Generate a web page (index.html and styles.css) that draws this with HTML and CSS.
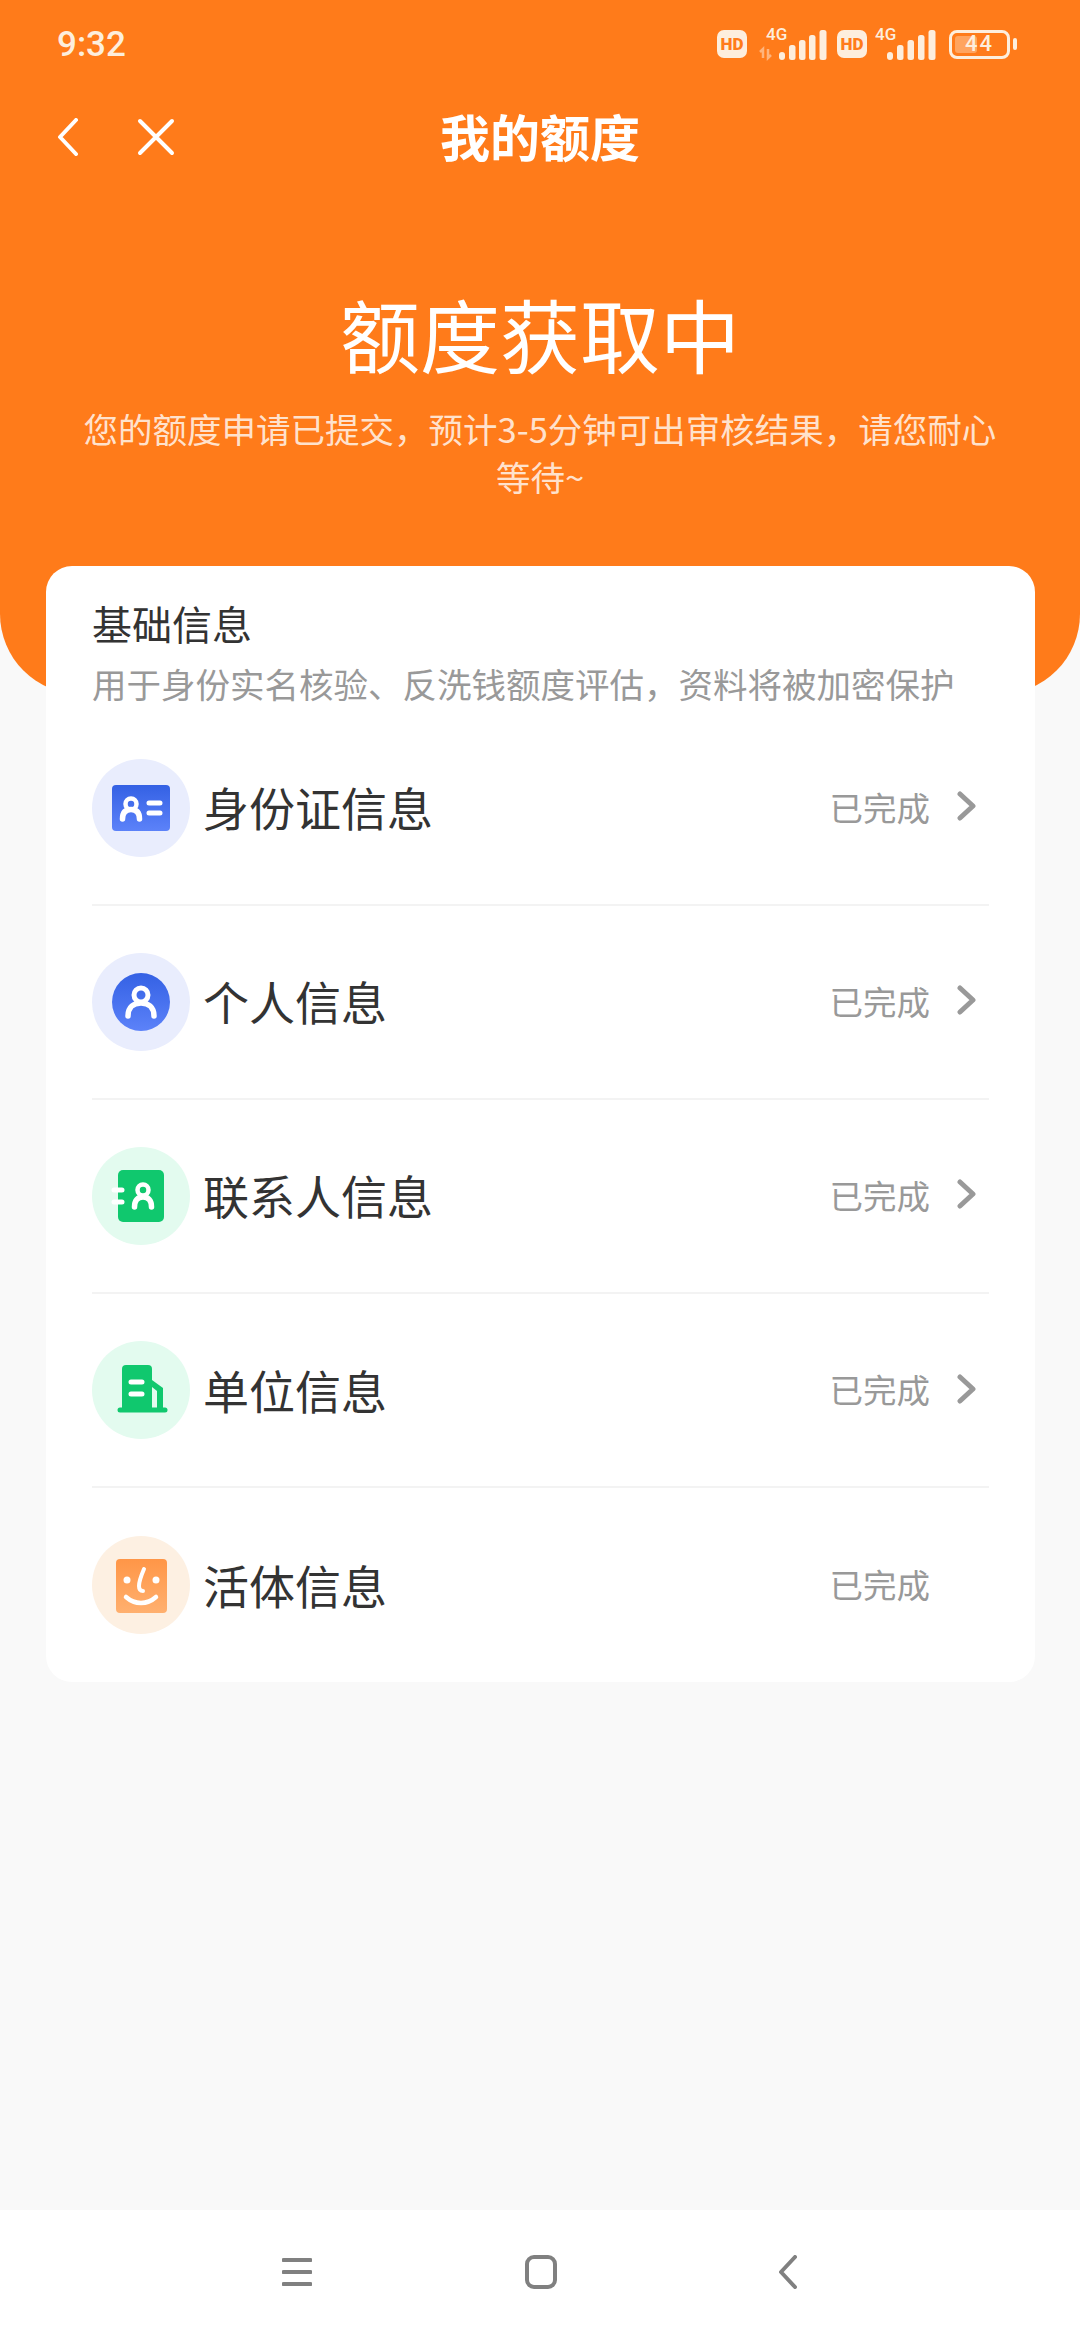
FILE: index.html
```html
<!DOCTYPE html>
<html lang="zh-CN">
<head>
  <meta charset="UTF-8" />
  <meta name="viewport" content="width=device-width, initial-scale=1.0" />
  <title>我的额度</title>
  <link rel="stylesheet" href="styles.css">
</head>
<body>
  <div class="page">
    <header class="header">
      <div class="status">
        <span class="time">9:32</span>
        <div class="status-right">
          <span class="hd">HD</span>
          <svg class="signal" width="70" height="40" viewBox="0 0 70 40">
            <text x="9" y="16" class="net">4G</text>
            <g transform="translate(0 2)">
              <path d="M6 32V23L3 26M11 23v9l3-3" class="arrows"/>
              <rect x="22" y="26" width="6" height="8" rx="3" class="bar"/>
              <rect x="32" y="19" width="6.5" height="15" rx="2.5" class="bar"/>
              <rect x="42" y="14" width="6.5" height="20" rx="2.5" class="bar"/>
              <rect x="52" y="9" width="6.5" height="25" rx="2.5" class="bar"/>
              <rect x="62.500" y="4" width="7" height="30" rx="2.5" class="bar"/>
            </g>
          </svg>
          <span class="hd">HD</span>
          <svg class="signal second" width="61" height="40" viewBox="0 0 61 40">
            <text x="0" y="16" class="net">4G</text>
            <g transform="translate(0 2)">
              <rect x="12" y="26" width="6" height="8" rx="3" class="bar"/>
              <rect x="22" y="19" width="6.5" height="15" rx="2.5" class="bar"/>
              <rect x="32.500" y="14" width="6.5" height="20" rx="2.5" class="bar"/>
              <rect x="43" y="9" width="6.500" height="25" rx="2.5" class="bar"/>
              <rect x="53.500" y="4" width="7" height="30" rx="2.5" class="bar"/>
            </g>
          </svg>
          <div class="battery"><span class="level"></span><span class="pct">44</span></div>
          <span class="tip"></span>
        </div>
      </div>

      <div class="topbar">
        <div class="top-icons">
          <svg width="22" height="38" viewBox="0 0 22 38"><path d="M19 2 3 19l16 17" class="top-line"/></svg>
          <svg width="38" height="38" viewBox="0 0 38 38"><path d="M3 3l32 32M35 3 3 35" class="top-line"/></svg>
        </div>
        <h1>我的额度</h1>
      </div>

      <div class="hero">
        <h2>额度获取中</h2>
        <p>您的额度申请已提交，预计3-5分钟可出审核结果，请您耐心等待~</p>
      </div>
    </header>

    <main class="card">
      <div class="card-head">
        <h3>基础信息</h3>
        <p>用于身份实名核验、反洗钱额度评估，资料将被加密保护</p>
      </div>

      <div class="row">
        <svg class="icon" viewBox="0 0 98 98">
          <defs>
            <linearGradient id="blue" x1="0" y1="0" x2="0" y2="1"><stop offset="0" stop-color="#3461e4"/><stop offset="1" stop-color="#5c82f9"/></linearGradient>
            <linearGradient id="peach" x1="0" y1="0" x2="0" y2="1"><stop offset="0" stop-color="#ff9647"/><stop offset="1" stop-color="#ffb06f"/></linearGradient>
          </defs>
          <circle cx="49" cy="49" r="49" fill="#e9edfd"/>
          <rect x="20" y="26" width="58" height="46" rx="4" fill="url(#blue)"/>
          <circle cx="39" cy="45" r="5.5" class="glyph" stroke-width="4.5"/>
          <path d="M30.500 60c0-7 3.500-9.500 8.500-9.500s8.500 2.500 8.500 9.500" class="glyph" stroke-width="5.5"/>
          <path d="M57 44h11M57 54h11" class="glyph" stroke-width="5"/>
        </svg>
        <span class="name">身份证信息</span>
        <span class="done">已完成</span>
        <svg class="arrow" width="20" height="30" viewBox="0 0 20 30"><path d="M3 3l13 12L3 27"/></svg>
      </div>

      <div class="row">
        <svg class="icon" viewBox="0 0 98 98">
          <circle cx="49" cy="49" r="49" fill="#e9edfd"/>
          <circle cx="49" cy="49" r="29" fill="url(#blue)"/>
          <circle cx="49" cy="42" r="7" class="glyph" stroke-width="5"/>
          <path d="M36 63c0-9 6-13 13-13s13 4 13 13" class="glyph" stroke-width="5.5"/>
        </svg>
        <span class="name">个人信息</span>
        <span class="done">已完成</span>
        <svg class="arrow" width="20" height="30" viewBox="0 0 20 30"><path d="M3 3l13 12L3 27"/></svg>
      </div>

      <div class="row">
        <svg class="icon" viewBox="0 0 98 98">
          <circle cx="49" cy="49" r="49" fill="#e3fbef"/>
          <rect x="26" y="23" width="46" height="52" rx="5" fill="#10c86e"/>
          <path d="M22 43h8M22 55h8" class="glyph" stroke-width="5"/>
          <circle cx="51" cy="43" r="5.5" class="glyph" stroke-width="4.5"/>
          <path d="M42.500 60c0-7 3.500-10 8.500-10s8.500 3 8.500 10" class="glyph" stroke-width="5.5"/>
        </svg>
        <span class="name">联系人信息</span>
        <span class="done">已完成</span>
        <svg class="arrow" width="20" height="30" viewBox="0 0 20 30"><path d="M3 3l13 12L3 27"/></svg>
      </div>

      <div class="row">
        <svg class="icon" viewBox="0 0 98 98">
          <circle cx="49" cy="49" r="49" fill="#e3fbef"/>
          <path d="M30 69V28a4 4 0 0 1 4-4h22a4 4 0 0 1 4 4v41z" fill="#10c86e"/>
          <path d="M60 39l11 8v22h-6V50l-5-4z" fill="#10c86e"/>
          <path d="M28 69h45" stroke="#10c86e" stroke-width="5" stroke-linecap="round"/>
          <path d="M39 41h11M39 53h11" class="glyph" stroke-width="5"/>
        </svg>
        <span class="name">单位信息</span>
        <span class="done">已完成</span>
        <svg class="arrow" width="20" height="30" viewBox="0 0 20 30"><path d="M3 3l13 12L3 27"/></svg>
      </div>

      <div class="row">
        <svg class="icon" viewBox="0 0 98 98">
          <circle cx="49" cy="49" r="49" fill="#fdf0e2"/>
          <rect x="24" y="23" width="51" height="54" rx="4" fill="url(#peach)"/>
          <circle cx="35" cy="44" r="3.5" fill="#fff"/>
          <circle cx="64" cy="44" r="3.5" fill="#fff"/>
          <path d="M52 33c-3 7-5 12-5 17 0 3 1 5 4 5" class="glyph" stroke-width="4"/>
          <path d="M34 61c9 8 21 8 30 0" class="glyph" stroke-width="4.5"/>
        </svg>
        <span class="name">活体信息</span>
        <span class="done">已完成</span>
        <svg class="arrow hidden" width="20" height="30" viewBox="0 0 20 30"><path d="M3 3l13 12L3 27"/></svg>
      </div>
    </main>

    <div class="spacer"></div>

    <nav class="navbar">
      <svg width="30" height="28" viewBox="0 0 30 28"><path d="M1.500 2h27M1.500 14h27M1.500 26h27" class="nav-line"/></svg>
      <svg class="nav-home" width="32" height="34" viewBox="0 0 32 34"><rect x="2" y="2" width="28" height="30" rx="7" class="nav-line"/></svg>
      <svg width="18" height="34" viewBox="0 0 18 34"><path d="M16 2 2 17l14 15" class="nav-line"/></svg>
    </nav>
  </div>
</body>
</html>
```

FILE: styles.css
```css
* {
  box-sizing: border-box;
}
body {
  margin: 0;
  font-family: "Noto Sans CJK SC", "Noto Sans", sans-serif;
  background: #f9f9f9;
}
h1, h2, h3, p {
  margin: 0;
  font-weight: 400;
}
.page {
  width: 1080px;
  height: 2340px;
  display: flex;
  flex-direction: column;
}

.header {
  height: 694px;
  flex-shrink: 0;
  background: #ff7b1a;
  border-radius: 0 0 80px 80px;
  color: white;
}
.status {
  height: 88px;
  padding: 0 63px 0 57px;
  display: flex;
  align-items: center;
  justify-content: space-between;
}
.time {
  font-family: Roboto, sans-serif;
  font-size: 35px;
  font-weight: 500;
  color: #fdeedd;
}
.status-right {
  display: flex;
  align-items: center;
  color: #fdeedd;
}
.hd {
  width: 30px;
  height: 28px;
  border-radius: 7px;
  background: #fdeedd;
  color: #ff7b1a;
  font-family: Roboto, sans-serif;
  font-size: 17px;
  font-weight: 900;
  line-height: 28px;
  text-align: center;
}
.signal {
  margin: 0 10px;
}
.signal.second {
  margin: 0 13px 0 8px;
}
.net {
  font-family: Roboto, sans-serif;
  font-size: 17px;
  font-weight: 500;
  fill: #fdeedd;
}
.bar {
  fill: #fdeedd;
}
.arrows {
  fill: none;
  stroke: #ffb47c;
  stroke-width: 2.5;
}
.battery {
  width: 61px;
  height: 29px;
  padding: 3px;
  border: 3.5px solid #fdeedd;
  border-radius: 8px;
  display: flex;
  position: relative;
}
.level {
  width: 44%;
  background: #ffa45f;
  border-radius: 3px;
}
.pct {
  position: absolute;
  inset: 0;
  font-family: Roboto, sans-serif;
  font-size: 22px;
  font-weight: 500;
  line-height: 22px;
  text-align: center;
  letter-spacing: 2px;
  color: #fdeedd;
}
.tip {
  width: 4px;
  height: 12px;
  margin-left: 3px;
  border-radius: 2px;
  background: #fdeedd;
}

.topbar {
  height: 98px;
  padding: 0 57px;
  display: grid;
  grid-template-columns: 1fr auto 1fr;
  align-items: center;
}
.top-icons {
  display: flex;
  align-items: center;
  gap: 58px;
}
.top-line {
  fill: none;
  stroke: white;
  stroke-width: 4;
  stroke-linecap: round;
  stroke-linejoin: round;
}
.topbar h1 {
  margin-bottom: 5px;
  font-size: 50px;
  font-weight: 700;
  line-height: 60px;
}

.hero {
  margin-top: 98px;
  padding: 0 75px;
  text-align: center;
}
.hero h2 {
  font-size: 80px;
  line-height: 96px;
}
.hero p {
  margin-top: 24px;
  font-size: 34.5px;
  line-height: 48px;
  color: rgba(255, 255, 255, 0.8);
}

.card {
  margin: -128px 45px 0 46px;
  padding: 0 46px;
  background: white;
  border-radius: 26px;
  position: relative;
}
.card-head {
  padding: 31px 0 5px;
}
.card-head h3 {
  font-size: 40px;
  line-height: 52px;
  color: #333;
}
.card-head p {
  margin-top: 9.5px;
  font-size: 34.5px;
  line-height: 48px;
  color: #999;
}
.row {
  height: 194.2px;
  padding-right: 12px;
  display: flex;
  align-items: center;
  border-bottom: 2px solid #f3f3f3;
}
.row:last-child {
  border-bottom: none;
}
.icon {
  width: 98px;
  height: 98px;
  flex-shrink: 0;
}
.glyph {
  fill: none;
  stroke: white;
  stroke-linecap: round;
}
.name {
  flex: 1;
  margin: 0 0 3px 13px;
  font-size: 46px;
  color: #333;
}
.done {
  margin-bottom: 3px;
  font-size: 33.5px;
  color: #999;
}
.arrow {
  margin: 0 0 3px 27px;
}
.arrow path {
  fill: none;
  stroke: #999;
  stroke-width: 5;
  stroke-linecap: round;
  stroke-linejoin: round;
}
.hidden {
  visibility: hidden;
}

.spacer {
  flex: 1;
}
.navbar {
  height: 130px;
  padding: 0 0 6px 282px;
  background: white;
  display: flex;
  align-items: center;
}
.nav-home {
  margin: 0 222px 0 213px;
}
.nav-line {
  fill: none;
  stroke: #808080;
  stroke-width: 4;
  stroke-linecap: round;
  stroke-linejoin: round;
}
```
